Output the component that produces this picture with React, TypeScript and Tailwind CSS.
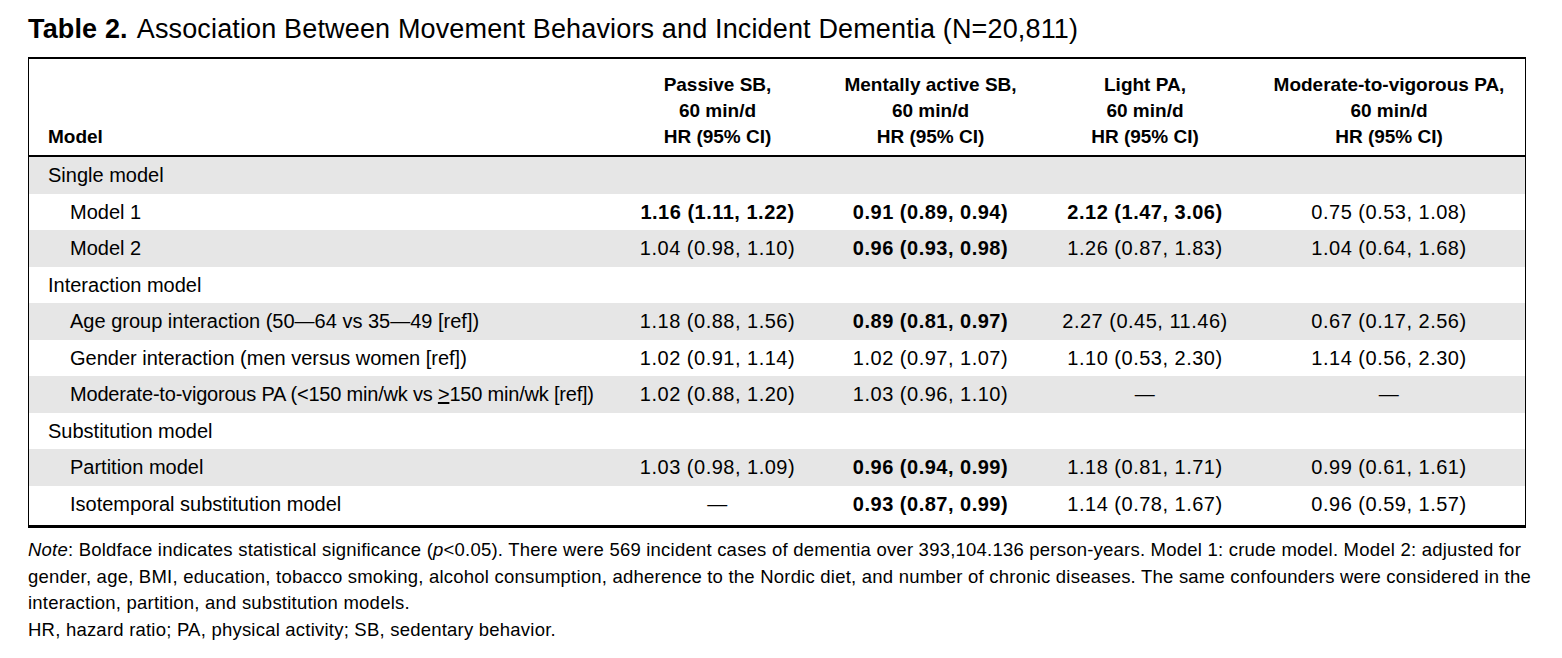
import React from 'react';

type Cell = { v: string; b?: boolean };
type Row =
    | { kind: 'section'; label: string }
    | { kind: 'data'; label: React.ReactNode; cells: Cell[] };

const rows: Row[] = [
    { kind: 'section', label: 'Single model' },
    {
        kind: 'data',
        label: 'Model 1',
        cells: [
            { v: '1.16 (1.11, 1.22)', b: true },
            { v: '0.91 (0.89, 0.94)', b: true },
            { v: '2.12 (1.47, 3.06)', b: true },
            { v: '0.75 (0.53, 1.08)' },
        ],
    },
    {
        kind: 'data',
        label: 'Model 2',
        cells: [
            { v: '1.04 (0.98, 1.10)' },
            { v: '0.96 (0.93, 0.98)', b: true },
            { v: '1.26 (0.87, 1.83)' },
            { v: '1.04 (0.64, 1.68)' },
        ],
    },
    { kind: 'section', label: 'Interaction model' },
    {
        kind: 'data',
        label: 'Age group interaction (50—64 vs 35—49 [ref])',
        cells: [
            { v: '1.18 (0.88, 1.56)' },
            { v: '0.89 (0.81, 0.97)', b: true },
            { v: '2.27 (0.45, 11.46)' },
            { v: '0.67 (0.17, 2.56)' },
        ],
    },
    {
        kind: 'data',
        label: 'Gender interaction (men versus women [ref])',
        cells: [
            { v: '1.02 (0.91, 1.14)' },
            { v: '1.02 (0.97, 1.07)' },
            { v: '1.10 (0.53, 2.30)' },
            { v: '1.14 (0.56, 2.30)' },
        ],
    },
    {
        kind: 'data',
        label: (
            <span className="tracking-[-0.2px]">
                Moderate-to-vigorous PA (&lt;150 min/wk vs <span className="underline">&gt;</span>150 min/wk [ref])
            </span>
        ),
        cells: [
            { v: '1.02 (0.88, 1.20)' },
            { v: '1.03 (0.96, 1.10)' },
            { v: '—' },
            { v: '—' },
        ],
    },
    { kind: 'section', label: 'Substitution model' },
    {
        kind: 'data',
        label: 'Partition model',
        cells: [
            { v: '1.03 (0.98, 1.09)' },
            { v: '0.96 (0.94, 0.99)', b: true },
            { v: '1.18 (0.81, 1.71)' },
            { v: '0.99 (0.61, 1.61)' },
        ],
    },
    {
        kind: 'data',
        label: 'Isotemporal substitution model',
        cells: [
            { v: '—' },
            { v: '0.93 (0.87, 0.99)', b: true },
            { v: '1.14 (0.78, 1.67)' },
            { v: '0.96 (0.59, 1.57)' },
        ],
    },
];

const headers = [
    ['Passive SB,', '60 min/d', 'HR (95% CI)'],
    ['Mentally active SB,', '60 min/d', 'HR (95% CI)'],
    ['Light PA,', '60 min/d', 'HR (95% CI)'],
    ['Moderate-to-vigorous PA,', '60 min/d', 'HR (95% CI)'],
];

const cols = 'grid grid-cols-[582px_213px_213px_216px_1fr]';

const App: React.FC = () => {
    return (
        <div className="bg-white min-h-screen w-[1562px] text-black font-['Liberation_Sans',Arial,sans-serif]">
            {/* Title */}
            <div className="pl-[28px] pt-[12px] h-[57px] text-[27px] leading-[34px] tracking-[0.15px]">
                <span className="font-bold">Table 2.</span>
                <span className="ml-[9px]">Association Between Movement Behaviors and Incident Dementia (N=20,811)</span>
            </div>

            {/* Table */}
            <div className="ml-[28px] w-[1498px] border-l border-r border-t-2 border-b-[3px] border-black pb-[3px]">
                <div className={`${cols} h-[98px] border-b-2 border-black text-[19px] font-bold leading-[26px]`}>
                    <div className="flex items-end pl-[19px] pb-[5px]">Model</div>
                    {headers.map((h, i) => (
                        <div key={i} className="flex flex-col items-center justify-end pb-[5px] text-center">
                            {h.map((line, j) => (
                                <span key={j}>{line}</span>
                            ))}
                        </div>
                    ))}
                </div>

                {rows.map((row, idx) => (
                    <div
                        key={idx}
                        className={`${cols} h-[36.5px] items-center text-[20px] ${idx % 2 === 0 ? 'bg-[#e6e6e6]' : 'bg-white'}`}
                    >
                        {row.kind === 'section' ? (
                            <div className="pl-[19px] whitespace-nowrap">{row.label}</div>
                        ) : (
                            <>
                                <div className="pl-[41px] whitespace-nowrap">{row.label}</div>
                                {row.cells.map((c, j) => (
                                    <div
                                        key={j}
                                        className={`text-center whitespace-nowrap tracking-[0.5px] ${c.b ? 'font-bold' : ''}`}
                                    >
                                        {c.v}
                                    </div>
                                ))}
                            </>
                        )}
                    </div>
                ))}
            </div>

            {/* Footnote */}
            <div className="pl-[28px] pr-[26px] pt-[9px] text-[18.5px] leading-[26.7px] tracking-[0.22px]">
                <p>
                    <span className="italic">Note</span>: Boldface indicates statistical significance (<span className="italic">p</span>&lt;0.05). There were 569 incident cases of dementia over 393,104.136 person-years. Model 1: crude model. Model 2: adjusted for gender, age, BMI, education, tobacco smoking, alcohol consumption, adherence to the Nordic diet, and number of chronic diseases. The same confounders were considered in the interaction, partition, and substitution models.
                </p>
                <p>HR, hazard ratio; PA, physical activity; SB, sedentary behavior.</p>
            </div>
        </div>
    );
};

export default App;
